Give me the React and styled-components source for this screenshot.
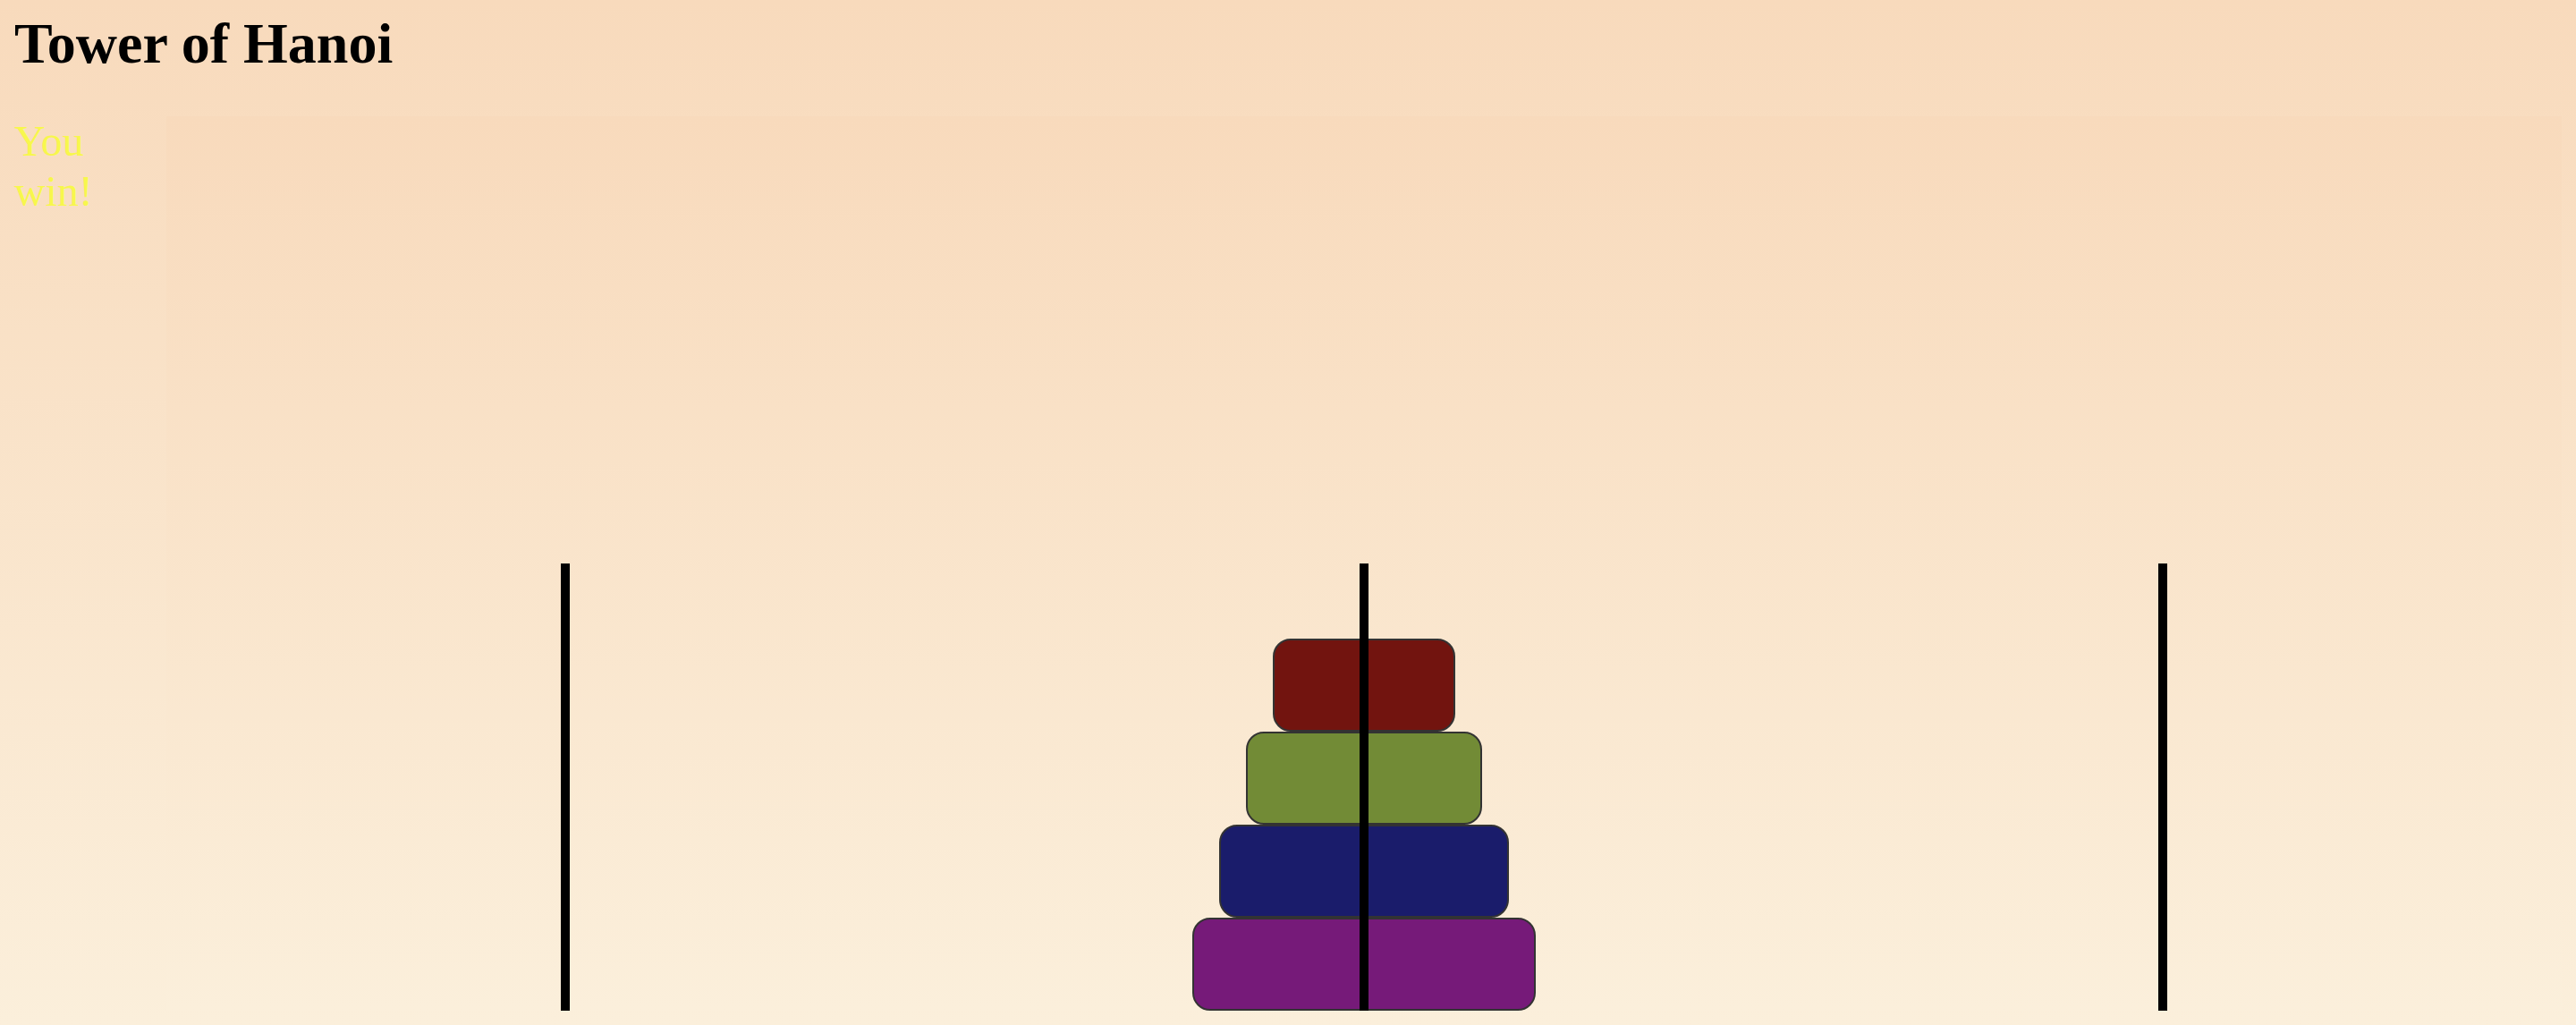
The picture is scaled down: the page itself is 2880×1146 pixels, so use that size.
import React from 'react';
import styled, { createGlobalStyle } from 'styled-components';

const towers = [[], [1, 2, 3, 4], []];

const diskColors = {
  1: '#72140f',
  2: '#728b36',
  3: '#1a1c6b',
  4: '#761a79',
};

const App = () => {
  return (
    <>
      <GlobalStyle />
      <Page>
        <Title>Tower of Hanoi</Title>
        <Board>
          <Message>You win!</Message>
          <TowerRow>
            {towers.map((disks, i) => (
              <Tower key={i}>
                <Rod />
                {disks.map((size) => (
                  <Disk key={size} size={size} color={diskColors[size]} />
                ))}
              </Tower>
            ))}
          </TowerRow>
        </Board>
      </Page>
    </>
  );
};

const GlobalStyle = createGlobalStyle`
  html, body {
    margin: 0;
    padding: 0;
  }
  body {
    min-height: 100vh;
    background: linear-gradient(180deg, #f8dabc 0%, #fbefdb 100%);
    font-family: "Liberation Serif", "Times New Roman", serif;
    color: #000;
  }
`;

const Page = styled.div`
  padding: 0 16px 16px;
`;

const Title = styled.h1`
  margin: 12px 0 44px;
  font-size: 64px;
  line-height: 74px;
  font-weight: bold;
`;

const Board = styled.div`
  display: flex;
  align-items: stretch;
`;

const Message = styled.div`
  width: 170px;
  flex-shrink: 0;
  font-size: 48px;
  line-height: 56px;
  color: #f7f74c;
`;

const TowerRow = styled.div`
  flex: 1;
  display: flex;
  background: linear-gradient(180deg, #f8dabc 0%, #fbefdb 100%);
`;

const Tower = styled.div`
  flex: 1;
  position: relative;
  height: 1000px;
  display: flex;
  flex-direction: column;
  justify-content: flex-end;
  align-items: center;
`;

const Rod = styled.div`
  position: absolute;
  bottom: 0;
  left: 50%;
  width: 10px;
  height: 500px;
  margin-left: -5px;
  background: #000;
  z-index: 1;
`;

const Disk = styled.div`
  box-sizing: border-box;
  width: ${(props) => 144 + props.size * 60}px;
  height: 104px;
  background: ${(props) => props.color};
  border: 2px solid #333;
  border-radius: 20px;
`;

export default App;
